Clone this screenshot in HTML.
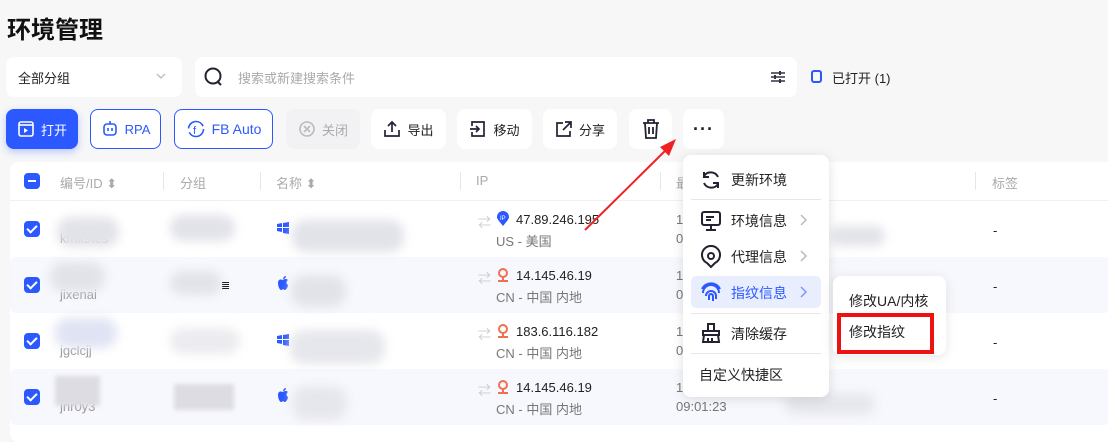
<!DOCTYPE html>
<html><head><meta charset="utf-8"><style>
*{margin:0;padding:0;box-sizing:border-box}
body{width:1108px;height:432px;overflow:hidden;background:#f7f7f8;font-family:"Liberation Sans","Noto Sans CJK SC",sans-serif;font-size:13px;color:#222;position:relative}
.a{position:absolute}
.box{position:absolute;background:#fff;border-radius:8px}
.btn{position:absolute;top:109px;height:40px;background:#fff;border-radius:8px;display:flex;align-items:center;justify-content:center;gap:6px;font-size:13px;color:#222}
.hd{position:absolute;top:173px;color:#aaa;font-size:13px}
.sep{position:absolute;top:172px;width:1px;height:18px;background:#e5e5ea}
.cb{position:absolute;left:24px;width:16px;height:16px;border-radius:4px;background:#2b59ff}
.cb:after{content:"";position:absolute;left:5px;top:2px;width:4px;height:8px;border:solid #fff;border-width:0 2px 2px 0;transform:rotate(45deg)}
.bl{position:absolute;background:#e2e3e9;filter:blur(5px);border-radius:14px}
.t{position:absolute;font-size:13px}
.g{color:#777}
.mi{position:absolute;left:731px;font-size:14px;color:#222}
</style></head><body>
<div class="a" style="left:7px;top:10px;font-size:24px;font-weight:bold;color:#111">环境管理</div>

<div class="box" style="left:6px;top:57px;width:176px;height:40px"></div>
<div class="a" style="left:18px;top:68px;font-size:13px">全部分组</div>
<svg class="a" style="left:156px;top:72px" width="10" height="8"><path d="M1 2l4 4 4-4" stroke="#bbb" fill="none" stroke-width="1.3"/></svg>
<div class="box" style="left:195px;top:57px;width:602px;height:40px"></div>
<svg class="a" style="left:203px;top:66px" width="22" height="22"><circle cx="10" cy="10" r="7.5" stroke="#223" stroke-width="2" fill="none"/><path d="M14 15l4 4" stroke="#223" stroke-width="2"/></svg>
<div class="a" style="left:238px;top:68px;color:#aaa">搜索或新建搜索条件</div>
<svg class="a" style="left:770px;top:69px" width="16" height="16"><path d="M1 4h14M1 8h14M1 12h14" stroke="#334" stroke-width="1.5"/><rect x="9" y="2" width="2" height="4" fill="#334"/><rect x="4" y="6" width="2" height="4" fill="#334"/><rect x="9" y="10" width="2" height="4" fill="#334"/></svg>
<div class="a" style="left:811px;top:70px;width:11px;height:13px;border:2px solid #2b59ff;border-radius:3px"></div>
<div class="a" style="left:832px;top:68px;font-size:13px">已打开 (1)</div>

<div class="btn" style="left:6px;width:72px;background:#2b59ff;color:#fff;box-shadow:0 3px 8px rgba(43,89,255,.3)"><svg width="18" height="18"><rect x="2" y="2" width="14" height="14" rx="2" stroke="#fff" stroke-width="1.6" fill="none"/><path d="M2 5h14" stroke="#fff" stroke-width="1.6"/><path d="M7 8l4 2.5-4 2.5z" fill="#fff"/></svg>打开</div>
<div class="btn" style="left:90px;width:71px;border:1px solid #2b59ff;color:#2b59ff"><svg width="18" height="18"><rect x="3" y="4" width="12" height="11" rx="3" stroke="#2b59ff" stroke-width="1.6" fill="none"/><path d="M7 8v3M11 8v3M9 1v3" stroke="#2b59ff" stroke-width="1.6"/></svg>RPA</div>
<div class="btn" style="left:174px;width:99px;border:1px solid #2b59ff;color:#2b59ff;font-size:14px"><svg width="20" height="20"><circle cx="10" cy="10" r="7.5" stroke="#2b59ff" stroke-width="1.6" fill="none" stroke-dasharray="20 4"/><text x="7" y="15" font-size="11" fill="#2b59ff" font-family="Liberation Sans">f</text></svg>FB Auto</div>
<div class="btn" style="left:286px;width:74px;background:#f2f2f4;color:#aaa"><svg width="18" height="18"><circle cx="9" cy="9" r="7" stroke="#bbb" stroke-width="1.6" fill="none"/><path d="M6 6l6 6M12 6l-6 6" stroke="#bbb" stroke-width="1.6"/></svg>关闭</div>
<div class="btn" style="left:371px;width:75px"><svg width="18" height="18"><path d="M9 12V3M5 6l4-4 4 4M2 10v6h14v-6" stroke="#223" stroke-width="1.7" fill="none"/></svg>导出</div>
<div class="btn" style="left:457px;width:75px"><svg width="18" height="18"><path d="M3 6V2h12v14H3v-4M1 9h9M7 6l3 3-3 3" stroke="#223" stroke-width="1.7" fill="none"/></svg>移动</div>
<div class="btn" style="left:543px;width:74px"><svg width="18" height="18"><path d="M8 3H2v13h13v-5M10 2h6v6M16 2l-8 8" stroke="#223" stroke-width="1.7" fill="none"/></svg>分享</div>
<div class="btn" style="left:629px;width:43px"><svg width="18" height="20"><path d="M1 4h16M6 4V1h6v3M3 4l1 15h10l1-15M7 8v7M11 8v7" stroke="#223" stroke-width="1.8" fill="none"/></svg></div>
<div class="btn" style="left:683px;width:41px;font-size:18px;font-weight:bold;letter-spacing:1px">···</div>

<div class="box" style="left:10px;top:162px;width:1110px;height:280px"></div>
<div class="a" style="left:24px;top:173px;width:16px;height:16px;border-radius:4px;background:#2b59ff"><div class="a" style="left:4px;top:7px;width:8px;height:2px;background:#fff"></div></div>
<div class="hd" style="left:60px">编号/ID ⬍</div><div class="sep" style="left:163px"></div>
<div class="hd" style="left:180px">分组</div><div class="sep" style="left:260px"></div>
<div class="hd" style="left:276px">名称 ⬍</div><div class="sep" style="left:460px"></div>
<div class="hd" style="left:476px">IP</div><div class="sep" style="left:660px"></div>
<div class="hd" style="left:676px">最</div><div class="sep" style="left:975px"></div>
<div class="hd" style="left:992px">标签</div>
<div class="a" style="left:10px;top:200px;width:1100px;height:1px;background:#eef0f5"></div>

<div class="a" style="left:10px;top:257px;width:1100px;height:56px;background:#f7f8fd;border-radius:6px"></div>
<div class="a" style="left:10px;top:369px;width:1100px;height:56px;background:#f7f8fd;border-radius:6px"></div>

<div class="cb" style="top:221px"></div><div class="cb" style="top:277px"></div><div class="cb" style="top:333px"></div><div class="cb" style="top:389px"></div>
<div class="t" style="left:60px;top:231px;color:#999">kmx9fes</div>
<div class="t" style="left:60px;top:287px;color:#999">jixenai</div>
<div class="t" style="left:60px;top:343px;color:#999">jgclcjj</div>
<div class="t" style="left:60px;top:399px;color:#999">jnr0y3</div>
<div class="bl" style="left:57px;top:217px;width:62px;height:30px"></div>
<div class="bl" style="left:52px;top:292px;width:0;height:0"></div>
<div class="bl" style="left:50px;top:262px;width:55px;height:30px"></div>
<div class="bl" style="left:55px;top:318px;width:62px;height:30px;background:#e0e3f3"></div>
<div class="bl" style="left:55px;top:376px;width:45px;height:30px;background:#dcdce2;filter:blur(2px);border-radius:2px"></div>

<div class="bl" style="left:170px;top:215px;width:65px;height:26px"></div>
<div class="bl" style="left:170px;top:271px;width:52px;height:24px"></div>
<div class="t" style="left:221px;top:279px;font-size:11px">≣</div>
<div class="bl" style="left:170px;top:328px;width:70px;height:26px;background:#ececf0"></div>
<div class="bl" style="left:174px;top:384px;width:60px;height:26px;background:#dcdce2;filter:blur(2px);border-radius:2px"></div>

<svg class="a" style="left:277px;top:222px" width="12" height="12"><path d="M0 2l5-1v4H0zM6 1l6-1v5H6zM0 6h5v4l-5-1zM6 6h6v6l-6-1z" fill="#2b59ff"/></svg>
<svg class="a" style="left:277px;top:334px" width="12" height="12"><path d="M0 2l5-1v4H0zM6 1l6-1v5H6zM0 6h5v4l-5-1zM6 6h6v6l-6-1z" fill="#2b59ff"/></svg>
<svg class="a" style="left:277px;top:276px" width="12" height="14"><path d="M6 4C4 3 1 3 1 7s2 7 3 7 2-1 2-1 1 1 2 1 3-3 3-5c-2-1-2-4 0-5-1-1-3-2-5 0zM6 3c0-1 1-3 3-3 0 2-2 3-3 3z" fill="#2b59ff"/></svg>
<svg class="a" style="left:277px;top:388px" width="12" height="14"><path d="M6 4C4 3 1 3 1 7s2 7 3 7 2-1 2-1 1 1 2 1 3-3 3-5c-2-1-2-4 0-5-1-1-3-2-5 0zM6 3c0-1 1-3 3-3 0 2-2 3-3 3z" fill="#2b59ff"/></svg>
<div class="bl" style="left:292px;top:220px;width:112px;height:32px"></div>
<div class="bl" style="left:291px;top:275px;width:55px;height:32px"></div>
<div class="bl" style="left:290px;top:330px;width:95px;height:34px;background:#e6e7ec"></div>
<div class="bl" style="left:292px;top:386px;width:55px;height:34px;background:#e6e7ec"></div>

<div class="t" style="left:478px;top:212px;color:#ccc">⇄</div><div class="t" style="left:478px;top:268px;color:#ccc">⇄</div><div class="t" style="left:478px;top:324px;color:#ccc">⇄</div><div class="t" style="left:478px;top:380px;color:#ccc">⇄</div>
<svg class="a" style="left:497px;top:211px" width="12" height="15"><path d="M6 15C2 10 0 8 0 6a6 6 0 0112 0c0 2-2 4-6 9z" fill="#2b59ff"/><text x="3" y="9" font-size="6" fill="#fff" font-family="Liberation Sans">IP</text></svg>
<svg class="a" style="left:497px;top:267px" width="12" height="15"><circle cx="6" cy="6" r="4" stroke="#f07050" stroke-width="2" fill="none"/><path d="M6 10v3M1 14h10" stroke="#f07050" stroke-width="2"/></svg>
<svg class="a" style="left:497px;top:323px" width="12" height="15"><circle cx="6" cy="6" r="4" stroke="#f07050" stroke-width="2" fill="none"/><path d="M6 10v3M1 14h10" stroke="#f07050" stroke-width="2"/></svg>
<svg class="a" style="left:497px;top:379px" width="12" height="15"><circle cx="6" cy="6" r="4" stroke="#f07050" stroke-width="2" fill="none"/><path d="M6 10v3M1 14h10" stroke="#f07050" stroke-width="2"/></svg>
<div class="t" style="left:516px;top:212px">47.89.246.195</div><div class="t g" style="left:496px;top:231px">US - 美国</div>
<div class="t" style="left:516px;top:268px">14.145.46.19</div><div class="t g" style="left:496px;top:287px">CN - 中国 内地</div>
<div class="t" style="left:516px;top:324px">183.6.116.182</div><div class="t g" style="left:496px;top:343px">CN - 中国 内地</div>
<div class="t" style="left:516px;top:380px">14.145.46.19</div><div class="t g" style="left:496px;top:399px">CN - 中国 内地</div>
<div class="t g" style="left:676px;top:212px">1</div><div class="t g" style="left:676px;top:231px">0</div>
<div class="t g" style="left:676px;top:268px">1</div><div class="t g" style="left:676px;top:287px">0</div>
<div class="t g" style="left:676px;top:324px">1</div><div class="t g" style="left:676px;top:343px">0</div>
<div class="t g" style="left:676px;top:380px">1</div><div class="t g" style="left:676px;top:399px">09:01:23</div>
<div class="bl" style="left:830px;top:226px;width:55px;height:20px"></div>
<div class="bl" style="left:785px;top:393px;width:90px;height:22px;background:#e6e7ec"></div>
<div class="t" style="left:993px;top:223px">-</div><div class="t" style="left:993px;top:279px">-</div><div class="t" style="left:993px;top:335px">-</div><div class="t" style="left:993px;top:391px">-</div>

<svg class="a" style="left:580px;top:130px" width="110" height="110"><path d="M5 100L90 16" stroke="#ee2222" stroke-width="2"/><path d="M96 9L80 17l9 9z" fill="#ee2222"/></svg>

<div class="box" style="left:683px;top:155px;width:146px;height:242px;box-shadow:0 2px 12px rgba(0,0,0,.12)"></div>
<svg class="a" style="left:700px;top:169px" width="22" height="22"><path d="M18 8A8 8 0 004 7M4 14a8 8 0 0014 1" stroke="#223" stroke-width="2" fill="none"/><path d="M4 3v5h5M18 19v-5h-5" stroke="#223" stroke-width="2" fill="none"/></svg>
<div class="mi" style="top:170px">更新环境</div>
<div class="a" style="left:691px;top:199px;width:130px;height:1px;background:#e5e5ea"></div>
<svg class="a" style="left:700px;top:210px" width="22" height="22"><rect x="2" y="2" width="18" height="13" rx="2" stroke="#223" stroke-width="2" fill="none"/><path d="M6 7h8M6 10h5M11 15v4M6 20h10" stroke="#223" stroke-width="2"/></svg>
<div class="mi" style="top:211px">环境信息</div><svg class="a" style="left:800px;top:214px" width="8" height="12"><path d="M1 1l5 5-5 5" stroke="#bbb" stroke-width="1.5" fill="none"/></svg>
<svg class="a" style="left:700px;top:245px" width="22" height="24"><path d="M11 22l-4-4A9 9 0 1115 18z" stroke="#223" stroke-width="2" fill="none"/><circle cx="11" cy="11" r="3" stroke="#223" stroke-width="2" fill="none"/></svg>
<div class="mi" style="top:247px">代理信息</div><svg class="a" style="left:800px;top:250px" width="8" height="12"><path d="M1 1l5 5-5 5" stroke="#bbb" stroke-width="1.5" fill="none"/></svg>
<div class="a" style="left:691px;top:276px;width:130px;height:32px;background:#e9eeff;border-radius:5px"></div>
<svg class="a" style="left:700px;top:281px" width="22" height="22"><path d="M3 12a8 8 0 0116 0M6 15a5 5 0 0110 0v3M9 19v-4a2 2 0 014 0v5M2 8a10 10 0 0118 0" stroke="#2b59ff" stroke-width="2" fill="none"/></svg>
<div class="mi" style="top:283px;color:#2b59ff">指纹信息</div><svg class="a" style="left:800px;top:286px" width="8" height="12"><path d="M1 1l5 5-5 5" stroke="#7d95ff" stroke-width="1.5" fill="none"/></svg>
<div class="a" style="left:691px;top:313px;width:130px;height:1px;background:#e5e5ea"></div>
<svg class="a" style="left:700px;top:322px" width="22" height="22"><path d="M8 2h6v7H8zM3 9h16v4H3zM4 13l-1 7h16l-1-7M8 16v4M12 16v4" stroke="#223" stroke-width="2" fill="none"/></svg>
<div class="mi" style="top:324px">清除缓存</div>
<div class="a" style="left:691px;top:353px;width:130px;height:1px;background:#e5e5ea"></div>
<div class="a" style="left:699px;top:365px;font-size:14px">自定义快捷区</div>

<div class="box" style="left:833px;top:276px;width:113px;height:79px;box-shadow:0 2px 12px rgba(0,0,0,.1)"></div>
<div class="a" style="left:849px;top:291px;font-size:14px">修改UA/内核</div>
<div class="a" style="left:837px;top:313px;width:97px;height:41px;border:4px solid #ee1111"></div>
<div class="a" style="left:849px;top:322px;font-size:14px">修改指纹</div>
</body></html>
